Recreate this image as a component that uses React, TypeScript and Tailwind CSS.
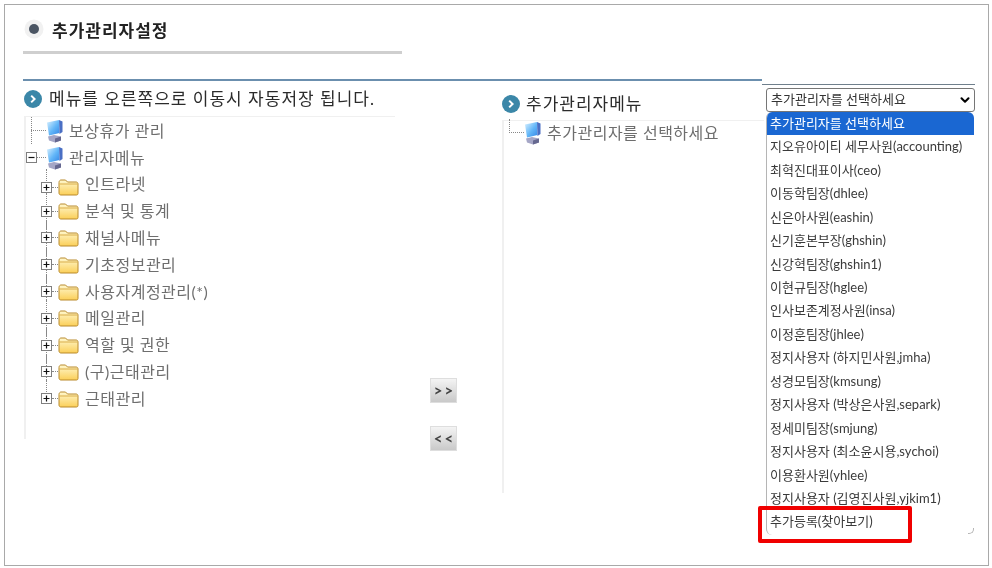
import { ChevronDown } from "lucide-react";

const FOLDERS = [
  "인트라넷",
  "분석 및 통계",
  "채널사메뉴",
  "기초정보관리",
  "사용자계정관리(*)",
  "메일관리",
  "역할 및 권한",
  "(구)근태관리",
  "근태관리",
];

const OPTIONS = [
  "추가관리자를 선택하세요",
  "지오유아이티 세무사원(accounting)",
  "최혁진대표이사(ceo)",
  "이동학팀장(dhlee)",
  "신은아사원(eashin)",
  "신기훈본부장(ghshin)",
  "신강혁팀장(ghshin1)",
  "이현규팀장(hglee)",
  "인사보존계정사원(insa)",
  "이정훈팀장(jhlee)",
  "정지사용자 (하지민사원,jmha)",
  "성경모팀장(kmsung)",
  "정지사용자 (박상은사원,separk)",
  "정세미팀장(smjung)",
  "정지사용자 (최소윤시용,sychoi)",
  "이용환사원(yhlee)",
  "정지사용자 (김영진사원,yjkim1)",
  "추가등록(찾아보기)",
];

function BulletIcon() {
  return (
    <svg width="18" height="18" viewBox="0 0 18 18" className="shrink-0">
      <circle cx="9" cy="9" r="9" fill="#3b87a8" />
      <path d="M7.2 5.6 10.6 9l-3.4 3.4" fill="none" stroke="#fff" strokeWidth="2" />
    </svg>
  );
}

function ComputerIcon() {
  return (
    <svg width="18" height="24" viewBox="0 0 18 24" className="shrink-0">
      <defs>
        <linearGradient id="screen" x1="0" y1="0" x2="1" y2="1">
          <stop offset="0" stopColor="#dcf2ff" />
          <stop offset="0.55" stopColor="#62b6f8" />
          <stop offset="1" stopColor="#3486e6" />
        </linearGradient>
      </defs>
      <path d="M2 17.500 8 16l7 1.500v4L9 23.500 3 21.500z" fill="#a5a6c6" />
      <path d="M9 19.500 15 17.500v4L9 23.500z" fill="#666890" />
      <path d="M1 3.500 13 1l.5 13L3 16.500z" fill="url(#screen)" />
      <path d="M13 1l3.500 1.500V13l-3 2z" fill="#4a6fc4" />
    </svg>
  );
}

function FolderIcon() {
  return (
    <svg width="21" height="18" viewBox="0 0 21 18" className="shrink-0">
      <defs>
        <linearGradient id="folder" x1="0" y1="0" x2="0" y2="1">
          <stop offset="0" stopColor="#fff8cf" />
          <stop offset="1" stopColor="#fbcf58" />
        </linearGradient>
      </defs>
      <path
        d="M1 4.500C1 3 2 2 3 2h4.500l2 2H18c1.200 0 2 .8 2 2v9.500c0 1-.8 1.500-1.500 1.500H3c-1.200 0-2-.8-2-2z"
        fill="url(#folder)"
        stroke="#b98a2c"
        strokeWidth="1"
      />
      <path d="M1.500 6h18" stroke="#d9ad4a" strokeWidth="1" />
    </svg>
  );
}

function ToggleBox({ open }: { open?: boolean }) {
  return (
    <svg width="11" height="11" viewBox="0 0 11 11" className="shrink-0">
      <rect x="0.5" y="0.5" width="10" height="10" fill="#fff" stroke="#7f7f7f" />
      <path d={open ? "M2.500 5.500h6" : "M2.500 5.500h6M5.500 2.500v6"} stroke="#111" strokeWidth="1.200" />
    </svg>
  );
}

function RootRow({ label, open, last }: { label: string; open?: boolean; last?: boolean }) {
  return (
    <div className="flex h-[27px] items-center text-[16px] tracking-[0.5px] text-[#6e6e6e]">
      <div className="relative h-full w-[20px] shrink-0">
        {open ? (
          <>
            <div className="absolute top-[8px] left-0">
              <ToggleBox open />
            </div>
            <div className="absolute top-[13px] left-[11px] w-[9px] border-t border-dotted border-[#888]" />
          </>
        ) : (
          <>
            <div
              className={
                last
                  ? "absolute top-0 left-[5px] h-[14px] border-l border-dotted border-[#888]"
                  : "absolute top-0 left-[5px] h-[27px] border-l border-dotted border-[#888]"
              }
            />
            <div className="absolute top-[13px] left-[5px] w-[15px] border-t border-dotted border-[#888]" />
          </>
        )}
      </div>
      <ComputerIcon />
      <span className="ml-[5px] whitespace-nowrap">{label}</span>
    </div>
  );
}

function FolderRow({ label, first, last }: { label: string; first?: boolean; last?: boolean }) {
  return (
    <div className="flex h-[26.8px] items-center text-[16px] tracking-[0.5px] text-[#6e6e6e]">
      <div className={first ? "relative ml-[15px] flex translate-y-[3px] items-center" : "relative ml-[15px] flex items-center"}>
        <div
          className={
            last
              ? "absolute bottom-[16px] left-[5px] h-[12px] border-l border-dotted border-[#888]"
              : "absolute top-[-9px] left-[5px] h-[36px] border-l border-dotted border-[#888]"
          }
        />
        <div className="relative">
          <ToggleBox />
        </div>
        <div className="w-[6px] border-t border-dotted border-[#888]" />
        <FolderIcon />
      </div>
      <span className="ml-[6px] whitespace-nowrap">{label}</span>
    </div>
  );
}

function MoveButton({ label }: { label: string }) {
  return (
    <button className="flex h-[25px] w-[27px] items-center justify-center border border-[#dedede] bg-gradient-to-b from-[#f4f4f4] to-[#c9c9c9] pl-[2px] text-[15px] font-bold tracking-[2px] text-[#444]">
      {label}
    </button>
  );
}

export default function App() {
  return (
    <div
      className="relative h-[568px] w-[992px] overflow-hidden bg-white p-[4px] pb-[2px] pr-[3px] blur-[0.35px]"
      style={{ fontFamily: 'Lato, "Noto Sans CJK KR", sans-serif' }}
    >
      <div className="flex h-full flex-col border border-[#a9a9a9] pl-[18px] pr-[13px]">
        {/* title */}
        <div className="flex h-[49px] w-[379px] shrink-0 items-center gap-[9px] border-b-[3px] border-[#cfcfcf] pt-[5px]">
          <svg width="20" height="20" viewBox="0 0 20 20" className="-mt-[4px] ml-px shrink-0">
            <circle cx="10" cy="10" r="9.500" fill="#f1f1f1" />
            <circle cx="10" cy="10" r="5" fill="#4b5563" />
          </svg>
          <span className="-ml-px text-[17px] font-bold tracking-[1px] text-[#222]">추가관리자설정</span>
        </div>

        {/* rule */}
        <div className="mt-[25px] flex shrink-0 items-start">
          <div className="h-[2px] w-[739px] bg-[#6b8fae]" />
          <div className="mt-[5px] h-px flex-1 bg-[#6f7f8c]" />
        </div>

        <div className="flex min-h-0 flex-1">
          {/* left tree */}
          <div className="w-[372px] shrink-0 pl-[1px] pt-[5px]">
            <div className="flex h-[18px] items-center gap-[7px]">
              <BulletIcon />
              <span className="whitespace-nowrap text-[17px] tracking-[1px] text-[#2b2b2b]">메뉴를 오른쪽으로 이동시 자동저장 됩니다.</span>
            </div>
            <div className="mt-[8px] h-[323px] border-t border-l-2 border-[#f0f0f0]">
              <RootRow label="보상휴가 관리" />
              <RootRow label="관리자메뉴" open />
              {FOLDERS.map((label, i) => (
                <FolderRow key={label} label={label} first={i === 0} last={i === FOLDERS.length - 1} />
              ))}
            </div>
          </div>

          {/* move buttons */}
          <div className="flex w-[107px] shrink-0 flex-col items-center gap-[23px] pt-[293px] pr-[10px]">
            <MoveButton label=">>" />
            <MoveButton label="<<" />
          </div>

          {/* right tree */}
          <div className="w-[262px] shrink-0 pt-[10px]">
            <div className="flex h-[18px] items-center gap-[6px]">
              <BulletIcon />
              <span className="whitespace-nowrap text-[17px] tracking-[1px] text-[#2b2b2b]">추가관리자메뉴</span>
            </div>
            <div className="mt-[7px] h-[373px] border-t border-l-2 border-[#f0f0f0]">
              <div className="-mt-[2px]">
                <RootRow label="추가관리자를 선택하세요" last />
              </div>
            </div>
          </div>

          {/* select */}
          <div className="flex-1 pt-[3px] pl-[2px]">
            <div className="flex h-[24px] items-center justify-between rounded-[3px] border border-[#767676] pl-[4px] pr-[2px] text-[13px] text-[#333]">
              <span>추가관리자를 선택하세요</span>
              <ChevronDown size={14} strokeWidth={3.500} className="text-black" />
            </div>
          </div>
        </div>
      </div>

      {/* open dropdown */}
      <div className="absolute top-[112px] left-[766px] h-[423px] w-[208px] overflow-hidden rounded-[6px] border-l border-[#b5b5b5] bg-white text-[13px] text-[#3a3a3a]">
        {OPTIONS.map((option, i) => (
          <div
            key={option}
            className={
              i === 0
                ? "flex h-[23.450px] items-center whitespace-nowrap bg-[#1a67d2] pl-[3px] text-white"
                : "flex h-[23.450px] items-center whitespace-nowrap pl-[3px]"
            }
          >
            {option}
          </div>
        ))}
      </div>
      <div className="absolute top-[528px] left-[968px] h-[6px] w-[6px] rounded-br-[5px] border-r border-b border-[#b5b5b5]" />

      {/* red highlight */}
      <div className="absolute top-[506px] left-[758px] h-[37px] w-[154px] rounded-[2px] border-[4px] border-[#f00000]" />
    </div>
  );
}
